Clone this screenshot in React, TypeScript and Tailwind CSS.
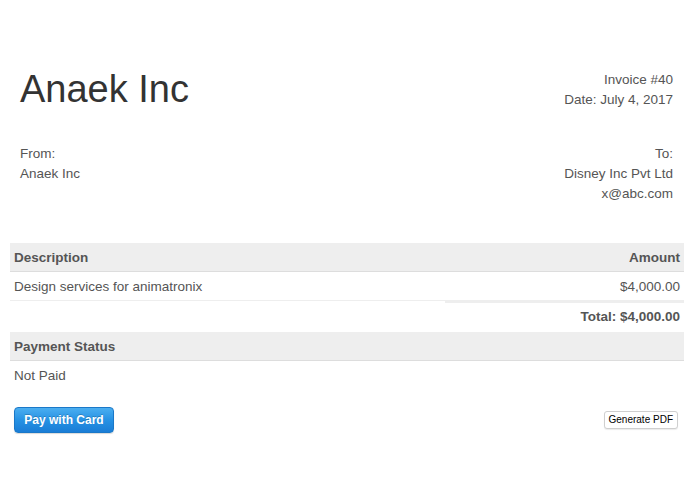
const InfoLine = ({ children }: { children: React.ReactNode }) => <div>{children}</div>;

export default function App() {
   return (
      <div className="w-[695px] h-[494px] bg-white font-['Liberation_Sans',Arial,sans-serif] text-[13.5px] leading-[20px] text-[#555] pl-[10px] pr-[11px] pt-[70px]">
         {/* TOP */}
         <div className="flex justify-between pl-[10px] pr-[11px]">
            <div className="text-[38px] leading-[38px] text-[#333]">Anaek Inc</div>
            <div className="text-right">
               <InfoLine>Invoice #40</InfoLine>
               <InfoLine>Date: July 4, 2017</InfoLine>
            </div>
         </div>

         {/* INFORMATION */}
         <div className="flex justify-between pl-[10px] pr-[11px] mt-[34px]">
            <div>
               <InfoLine>From:</InfoLine>
               <InfoLine>Anaek Inc</InfoLine>
            </div>
            <div className="text-right">
               <InfoLine>To:</InfoLine>
               <InfoLine>Disney Inc Pvt Ltd</InfoLine>
               <InfoLine>x@abc.com</InfoLine>
            </div>
         </div>

         {/* TABLE */}
         <div className="mt-[39px]">
            <div className="flex justify-between bg-[#eee] border-b border-[#ddd] font-bold px-[4px] pt-[5px] pb-[3px]">
               <div>Description</div>
               <div>Amount</div>
            </div>
            <div className="flex justify-between border-b border-[#eee] px-[4px] pt-[5px] pb-[3px]">
               <div>Design services for animatronix</div>
               <div>$4,000.00</div>
            </div>
            <div className="flex">
               <div className="w-[435px]"></div>
               <div className="flex-1 border-t-2 border-[#eee] font-bold text-right px-[4px] pt-[4px] pb-[5px]">
                  Total: $4,000.00
               </div>
            </div>
            <div className="bg-[#eee] border-b border-[#ddd] font-bold px-[4px] pt-[5px] pb-[3px]">
               Payment Status
            </div>
            <div className="px-[4px] pt-[5px] pb-[3px]">Not Paid</div>
         </div>

         {/* ACTIONS */}
         <div className="flex justify-between items-center mt-[18px] pl-[4px] pr-[6px]">
            <button className="w-[100px] h-[26px] rounded-[4px] bg-gradient-to-b from-[#4aaef0] via-[#2692e4] to-[#1a7dd6] border border-[#1a78c8] text-white font-bold text-[12px] leading-none shadow-[0_1px_1px_rgba(0,0,0,0.15)] [text-shadow:0_-1px_0_rgba(0,0,0,0.2)]">
               Pay with Card
            </button>
            <button className="h-[18px] px-[4px] rounded-[3px] border border-[#cfcfcf] bg-white text-black text-[10px] leading-none shadow-[0_1px_1px_rgba(0,0,0,0.08)]">
               Generate PDF
            </button>
         </div>
      </div>
   );
}
